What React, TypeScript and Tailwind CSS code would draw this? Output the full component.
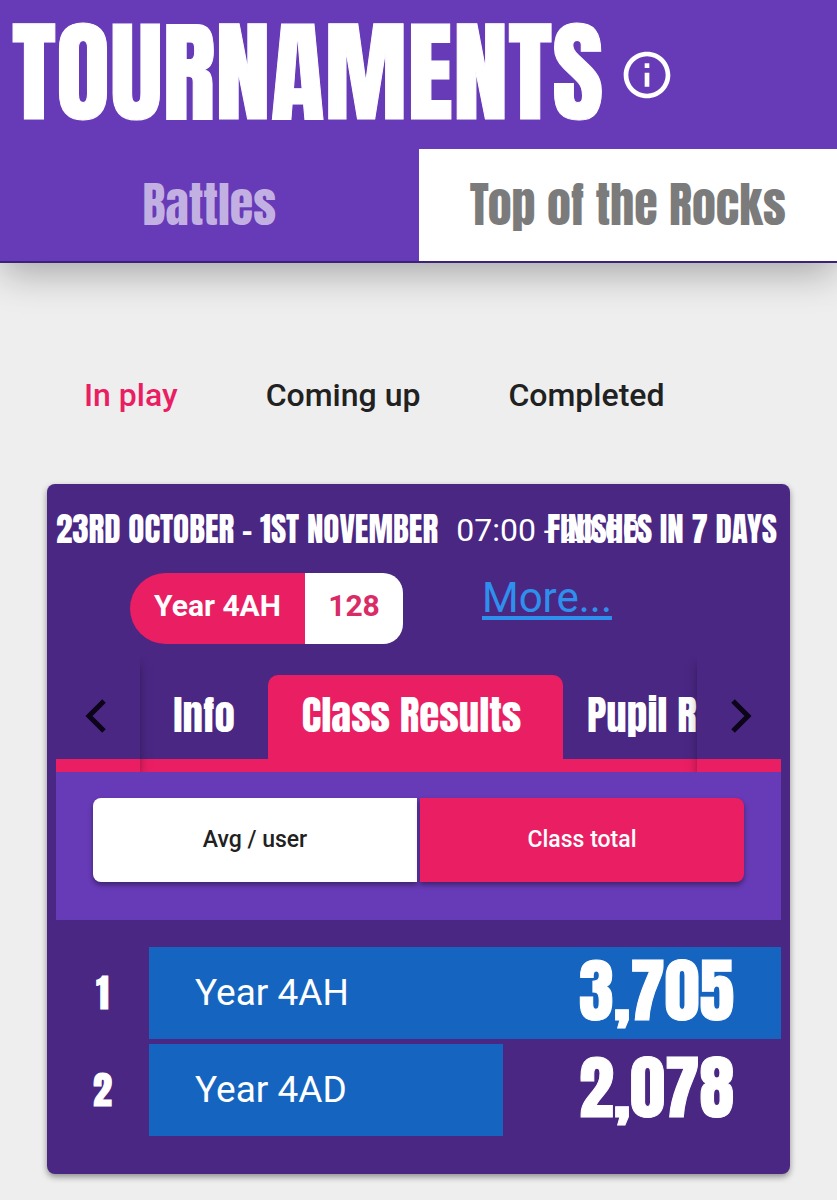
import React from 'react';
import { MdInfoOutline } from 'react-icons/md';

const display = "font-['Anton','Impact','Liberation_Sans_Narrow',sans-serif] font-normal";
const heavy = "[-webkit-text-stroke:1px_currentColor]";

const filters = [
    { name: "In play", color: "text-[#e91e63]" },
    { name: "Coming up", color: "text-[#212121]" },
    { name: "Completed", color: "text-[#212121]" },
];

const results = [
    { rank: 1, name: "Year 4AH", score: 3705 },
    { rank: 2, name: "Year 4AD", score: 2078 },
];

const topScore = results[0].score;

function Chevron({ flip }: { flip?: boolean }) {
    return (
        <svg width="22" height="36" viewBox="0 0 22 36" fill="none" stroke="#0c0418" strokeWidth="5" className={flip ? 'rotate-180' : ''}>
            <path d="M19 3 L4 18 L19 33" />
        </svg>
    );
}

export default function App() {
    return (
        <div className="min-h-screen bg-[#eeeeee] font-['Roboto',sans-serif] overflow-hidden pb-6">
            <header className="bg-[#673ab7] border-b-2 border-[#3d2378] shadow-[0_12px_36px_-2px_rgba(0,0,0,0.3)]">
                <div className="h-[149px] flex items-center gap-3 pl-3">
                    <h1 className={`${display} ${heavy} text-[111px] leading-[145px] pb-1 text-white`}>TOURNAMENTS</h1>
                    <button aria-label="About tournaments" className="pl-1 text-white">
                        <MdInfoOutline size={56} />
                    </button>
                </div>
                <nav className="grid grid-cols-2 h-[112px]">
                    <button className={`${display} text-[48px] leading-none text-[#c3b0e2]`}>Battles</button>
                    <button className={`${display} text-[48px] leading-none text-[#7b7b7b] bg-white whitespace-nowrap`}>Top of the Rocks</button>
                </nav>
            </header>

            <main className="px-[47px]">
                <div className="h-[221px] pt-[42px] pl-[37px] flex items-center gap-[88px]">
                    {filters.map((filter) => (
                        <button key={filter.name} className={`text-[32px] font-medium leading-10 whitespace-nowrap ${filter.color}`}>
                            {filter.name}
                        </button>
                    ))}
                </div>

                <section className="bg-[#4a2783] rounded-lg px-[9px] pb-[38px] shadow-[0_3px_6px_rgba(0,0,0,0.4)]">
                    <div className="h-[89px] pt-0.5 flex items-center text-white whitespace-nowrap">
                        <h2 className={`${display} text-[33px]`}>23RD OCTOBER - 1ST NOVEMBER</h2>
                        {/* The time range runs on underneath the countdown */}
                        <span className="flex-1 w-0 pl-[18px] text-[32px]">07:00 - 20:00</span>
                        <span className={`${display} relative pr-1 text-[33px]`}>FINISHES IN 7 DAYS</span>
                    </div>

                    <div className="flex items-start pl-[74px] gap-[79px]">
                        <div className="flex h-[71px] text-[30px] font-bold leading-[66px] whitespace-nowrap">
                            <span className="bg-[#e91e63] text-white rounded-l-full w-[175px] text-center">Year 4AH</span>
                            <span className="bg-white text-[#d92b66] rounded-r-[20px] w-[98px] text-center">128</span>
                        </div>
                        <a href="#" className="text-[42px] leading-[50px] text-[#2e90ec] underline decoration-4 underline-offset-4">More...</a>
                    </div>

                    <div className="flex h-[117px] mt-[11px] overflow-hidden">
                        <button aria-label="Previous tabs" className="relative z-10 w-[84px] shrink-0 flex items-center justify-center pt-[18px] pr-1 bg-[#4a2783] border-b-[13px] border-[#e91e63] shadow-[0_8px_10px_-2px_rgba(0,0,0,0.5)]">
                            <Chevron />
                        </button>
                        <div className={`${display} flex-1 min-w-0 flex items-end whitespace-nowrap text-white text-[41px] leading-none`}>
                            <button className="h-[97px] w-[128px] pb-1.5 shrink-0 border-b-[13px] border-[#e91e63]">Info</button>
                            <button className="h-[97px] w-[295px] pb-1.5 pr-2 shrink-0 bg-[#e91e63] rounded-t-[10px] border-b-[13px] border-[#e91e63]">Class Results</button>
                            <button className="h-[97px] pb-1.5 shrink-0 px-6 border-b-[13px] border-[#e91e63]">Pupil Results</button>
                        </div>
                        <button aria-label="Next tabs" className="relative z-10 w-[84px] shrink-0 flex items-center justify-center pt-[18px] pl-1 bg-[#4a2783] border-b-[13px] border-[#e91e63] shadow-[0_8px_10px_-2px_rgba(0,0,0,0.5)]">
                            <Chevron flip />
                        </button>
                    </div>

                    <div className="bg-[#673ab7] h-[148px] px-[37px] pt-[26px] grid grid-cols-2 gap-[3px] text-[23px] font-medium">
                        <button className="h-[84px] bg-white text-[#212121] rounded-l-lg shadow-[0_3px_5px_rgba(0,0,0,0.4)]">Avg / user</button>
                        <button className="h-[84px] bg-[#e91e63] text-white rounded-r-lg shadow-[0_3px_5px_rgba(0,0,0,0.4)]">Class total</button>
                    </div>

                    <ol className="mt-[27px] flex flex-col gap-[5px] text-white">
                        {results.map((row) => (
                            <li key={row.rank} className="flex items-center h-[92px]">
                                <span className={`${display} ${heavy} w-[93px] text-center text-[38px] leading-none`}>{row.rank}</span>
                                <div className="flex-1 h-full grid">
                                    <div
                                        className="col-start-1 row-start-1 bg-[#1565c0]"
                                        style={{ width: `${(row.score / topScore) * 100}%` }}
                                    ></div>
                                    <div className="col-start-1 row-start-1 flex items-center justify-between pl-[46px] pr-[47px]">
                                        <span className="text-[37px]">{row.name}</span>
                                        <span className={`${display} ${heavy} text-[70px] leading-none pb-1`}>{row.score.toLocaleString('en-US')}</span>
                                    </div>
                                </div>
                            </li>
                        ))}
                    </ol>
                </section>
            </main>
        </div>
    );
}
